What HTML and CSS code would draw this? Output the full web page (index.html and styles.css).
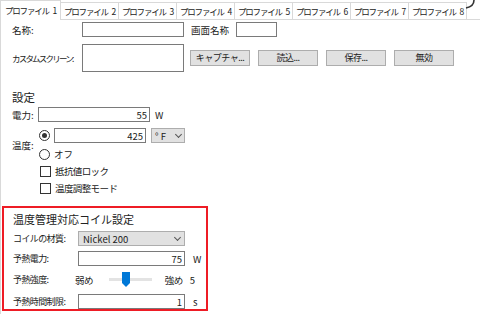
FILE: index.html
```html
<!DOCTYPE html>
<html lang="ja">
<head>
  <meta charset="UTF-8" />
  <title>プロファイル設定</title>
  <link rel="stylesheet" href="styles.css">
</head>
<body>
  <div class="tabs">
    <div class="tab active">プロファイル 1</div>
    <div class="tab">プロファイル 2</div>
    <div class="tab">プロファイル 3</div>
    <div class="tab">プロファイル 4</div>
    <div class="tab">プロファイル 5</div>
    <div class="tab">プロファイル 6</div>
    <div class="tab">プロファイル 7</div>
    <div class="tab">プロファイル 8</div>
    <svg class="arc" width="14" height="10" viewBox="0 0 14 10">
      <path d="M11 0 C11 4 8 7 3 8" fill="none" stroke="#333" stroke-width="1.6"/>
    </svg>
  </div>

  <div class="panel">
    <div class="row name-row">
      <span class="label wide">名称:</span>
      <input class="text name-input" type="text">
      <span class="screen-label">画面名称</span>
      <input class="text screen-input" type="text">
    </div>

    <div class="row custom-row">
      <span class="label wide kana">カスタムスクリーン:</span>
      <textarea class="text custom-box"></textarea>
      <div class="buttons">
        <button>キャプチャ...</button>
        <button>読込...</button>
        <button>保存...</button>
        <button>無効</button>
      </div>
    </div>

    <div class="heading">設定</div>

    <div class="row power-row">
      <span class="label short">電力:</span>
      <input class="text num power-input" type="text" value="55">
      <span class="unit">W</span>
    </div>

    <div class="temp">
      <span class="label short temp-label">温度:</span>
      <div class="temp-options">
        <div class="row opt">
          <span class="radio checked"></span>
          <input class="text num temp-input" type="text" value="425">
          <div class="select unit-select">° F <span class="chev"></span></div>
        </div>
        <div class="row opt"><span class="radio"></span>オフ</div>
        <div class="row opt"><span class="check"></span><span class="kana-s">抵抗値ロック</span></div>
        <div class="row opt"><span class="check"></span><span class="kana-s">温度調整モード</span></div>
      </div>
    </div>

    <div class="coil">
      <div class="coil-title">温度管理対応コイル設定</div>
      <div class="row coil-row">
        <span class="label coil-label">コイルの材質:</span>
        <div class="select coil-select">Nickel 200 <span class="chev"></span></div>
      </div>
      <div class="row coil-row">
        <span class="label coil-label">予熱電力:</span>
        <input class="text num coil-input" type="text" value="75">
        <span class="unit coil-unit">W</span>
      </div>
      <div class="row coil-row slider-row">
        <span class="label coil-label">予熱強度:</span>
        <span class="kana-s">弱め</span>
        <div class="slider">
          <div class="track"></div>
          <svg class="thumb" width="8" height="15" viewBox="0 0 8 15">
            <path d="M0 0 H8 V11 L4 15 L0 11 Z" fill="#0078d7"/>
          </svg>
        </div>
        <span class="kana-s">強め</span>
        <span class="level">5</span>
      </div>
      <div class="row coil-row">
        <span class="label coil-label">予熱時間制限:</span>
        <input class="text num coil-input" type="text" value="1">
        <span class="unit coil-unit">s</span>
      </div>
    </div>
  </div>
</body>
</html>
```

FILE: styles.css
```css
body {
  margin: 0;
  font-family: "Noto Sans CJK JP", "Noto Sans", sans-serif;
  font-size: 9.5px;
  line-height: 14px;
  color: #222;
  background: #fff;
  overflow: hidden;
  white-space: nowrap;
}
.tabs {
  display: flex;
  align-items: flex-end;
  height: 19px;
  position: relative;
}
.tab {
  width: 57px;
  height: 16px;
  line-height: 16px;
  border: 1px solid #d9d9d9;
  border-bottom: none;
  margin-left: -1px;
  text-align: center;
  background: #fff;
  font-size: 8.5px;
  letter-spacing: -1.2px;
  word-spacing: 3px;
  overflow: hidden;
  box-sizing: content-box;
}
.tab.active {
  width: 59px;
  height: 19px;
  line-height: 19px;
  margin-left: 0;
  margin-bottom: -1px;
  position: relative;
  z-index: 1;
}
.arc {
  align-self: flex-start;
  margin-left: -4px;
}
.panel {
  border-top: 1px solid #d9d9d9;
  border-left: 1px solid #d9d9d9;
  height: 300px;
  box-sizing: border-box;
}
.row {
  display: flex;
  align-items: center;
}
.label {
  padding-left: 11px;
  box-sizing: border-box;
  flex: none;
}
.label.wide {
  width: 81px;
}
.label.short {
  width: 37px;
}
.kana {
  font-size: 8.5px;
  letter-spacing: -1.8px;
}
.kana-s {
  letter-spacing: -0.6px;
}
.text {
  border: 1px solid #7a7a7a;
  background: #fff;
  height: 15px;
  padding: 0 2px;
  box-sizing: border-box;
  font: inherit;
  color: #222;
  outline: none;
  margin: 0;
}
.num {
  text-align: right;
}
.name-row {
  margin-top: 2px;
  height: 15px;
}
.name-input {
  width: 102px;
}
.screen-label {
  margin-left: 7px;
  width: 45px;
}
.screen-input {
  width: 41px;
}
.custom-row {
  margin-top: 7px;
}
.custom-box {
  width: 102px;
  height: 28px;
  resize: none;
}
.buttons {
  display: flex;
  gap: 8px;
  margin-left: 6px;
}
button {
  width: 60px;
  height: 16px;
  padding: 0;
  border: 1px solid #adadad;
  background: #e1e1e1;
  font: inherit;
  font-size: 9px;
  letter-spacing: -0.5px;
  line-height: 14px;
  color: #222;
}
.heading {
  margin-top: 17px;
  padding-left: 11px;
  font-size: 11.5px;
  line-height: 16px;
}
.power-row {
  margin-top: 2px;
}
.power-input {
  width: 112px;
}
.unit {
  margin-left: 5px;
}
.temp {
  display: flex;
  align-items: flex-start;
  margin-top: 6px;
}
.temp-label {
  margin-top: 10px;
}
.temp-options {
  display: flex;
  flex-direction: column;
  gap: 3px;
}
.opt {
  height: 14px;
}
.opt:first-child {
  height: 15px;
  margin-bottom: 1px;
}
.radio {
  width: 11px;
  height: 11px;
  border: 1px solid #333;
  border-radius: 50%;
  margin-left: 1px;
  margin-right: 4px;
  box-sizing: border-box;
  position: relative;
  flex: none;
}
.radio.checked::after {
  content: "";
  position: absolute;
  left: 2px;
  top: 2px;
  width: 5px;
  height: 5px;
  border-radius: 50%;
  background: #333;
}
.check {
  width: 11px;
  height: 11px;
  border: 1px solid #333;
  margin-left: 2px;
  margin-right: 4px;
  box-sizing: border-box;
  flex: none;
}
.temp-input {
  width: 92px;
}
.select {
  display: flex;
  align-items: center;
  justify-content: space-between;
  height: 15px;
  border: 1px solid #adadad;
  background: #e1e1e1;
  padding: 0 4px;
  box-sizing: border-box;
}
.unit-select {
  width: 34px;
  margin-left: 5px;
  padding: 0 3px;
}
.chev {
  width: 4px;
  height: 4px;
  border-right: 1px solid #555;
  border-bottom: 1px solid #555;
  transform: rotate(45deg);
  margin-top: -3px;
}
.coil {
  margin-top: 11px;
  margin-left: 1px;
  width: 206px;
  height: 105px;
  border: 2px solid #ee1c25;
  box-sizing: border-box;
}
.coil-title {
  margin-top: 3px;
  padding-left: 9px;
  font-size: 11px;
  line-height: 16px;
}
.coil-row {
  height: 15px;
  margin-top: 5px;
}
.coil-row:nth-child(2) {
  margin-top: 4px;
}
.coil-label {
  width: 74px;
  padding-left: 9px;
  font-size: 9px;
  letter-spacing: -0.6px;
}
.coil-select {
  width: 107px;
  padding-left: 4px;
}
.coil-input {
  width: 107px;
}
.coil-unit {
  margin-left: 8px;
}
.slider-row {
  margin-top: 6px;
}
.slider {
  position: relative;
  width: 43px;
  height: 15px;
  margin: 0 13px 0 16px;
  display: flex;
  align-items: center;
}
.slider-row .coil-label {
  width: 71px;
}
.track {
  width: 100%;
  height: 3px;
  background: #e3e3e3;
}
.thumb {
  position: absolute;
  left: 13px;
  top: 0;
}
.level {
  margin-left: 7px;
}
.slider-row + .coil-row {
  margin-top: 7px;
}
```
